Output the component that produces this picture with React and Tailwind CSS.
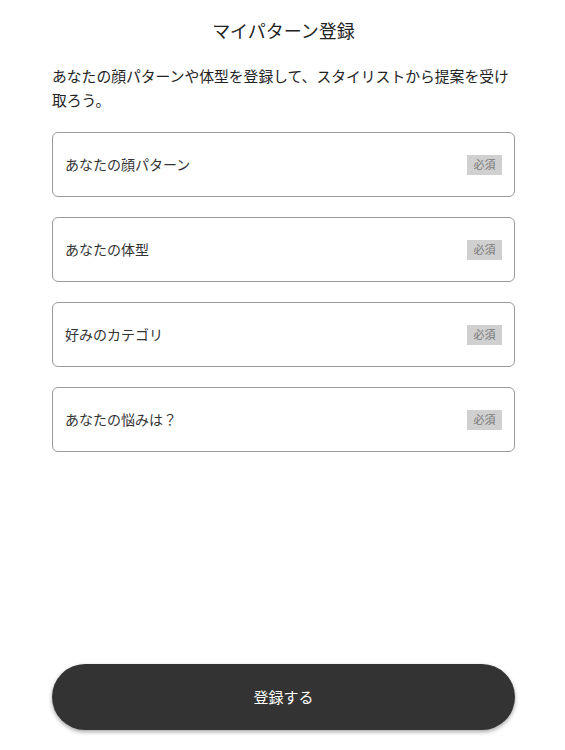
const fields = [
  "あなたの顔パターン",
  "あなたの体型",
  "好みのカテゴリ",
  "あなたの悩みは？",
];

const App = () => {
  return (
    <div
      className="flex flex-col min-h-screen bg-white pl-[52px] pr-[50px] pb-5 text-[#222]"
      style={{ fontFamily: '"Noto Sans CJK JP", "Noto Sans", sans-serif' }}
    >
      <h1 className="pt-4 text-center text-[18px] leading-7 font-normal">
        マイパターン登録
      </h1>

      <p className="mt-5 text-[14.8px] leading-6">
        あなたの顔パターンや体型を登録して、スタイリストから提案を受け取ろう。
      </p>

      <div className="mt-5 flex flex-col gap-5">
        {fields.map((label) => (
          <button
            key={label}
            type="button"
            className="flex items-center justify-between h-[65px] px-3 rounded-md border border-[#9a9a9a] bg-white text-left"
          >
            <span className="text-[14px] text-[#333]">{label}</span>
            <span className="flex items-center justify-center w-[35px] h-5 bg-[#d0d0d0] text-[11px] text-[#777]">
              必須
            </span>
          </button>
        ))}
      </div>

      <button
        type="button"
        className="mt-auto h-[66px] w-full rounded-full bg-[#333333] text-[15px] text-white shadow-[0_2px_4px_rgba(0,0,0,0.35)]"
      >
        登録する
      </button>
    </div>
  );
};

export default App;
